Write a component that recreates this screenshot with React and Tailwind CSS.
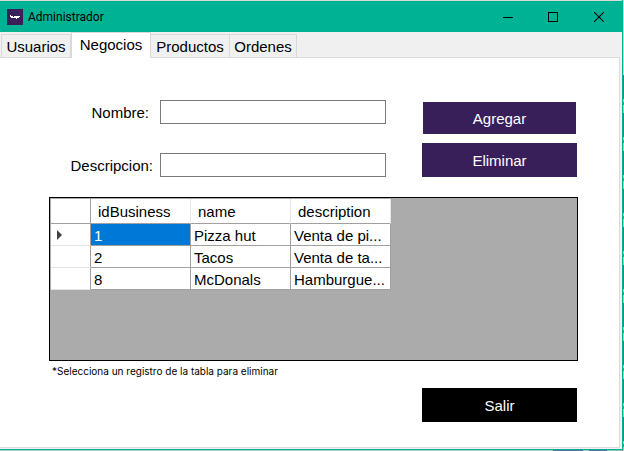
import React from "react";

const TABS = ["Usuarios", "Negocios", "Productos", "Ordenes"];
const TAB_WIDTHS = ["w-[70px]", "w-[80px]", "w-[79px]", "w-[67px]"];

const ROWS = [
  { id: "1", name: "Pizza hut", description: "Venta de pi..." },
  { id: "2", name: "Tacos", description: "Venta de ta..." },
  { id: "8", name: "McDonals", description: "Hamburgue..." },
];

function TitleBar() {
  return (
    <header className="flex h-8 items-stretch border-t border-[#d9d9d9] bg-[#00b294]">
      <div className="flex flex-1 items-center gap-[5px] pl-[7px]">
        <svg width="16" height="16" viewBox="0 0 16 16" aria-hidden="true" shapeRendering="crispEdges">
          <rect width="16" height="16" fill="#381f5a" />
          <path d="M3 6h1v1h2v1h1V7h6v1h-1v1h-2v1H9V9H4V8H3z" fill="#fff" />
        </svg>
        <h1 className="font-[Roboto,sans-serif] text-[12px] leading-4">Administrador</h1>
      </div>
      <div className="flex">
        <button type="button" aria-label="Minimizar" className="flex w-[45px] items-center justify-center">
          <svg width="10" height="10" viewBox="0 0 10 10" shapeRendering="crispEdges">
            <rect y="5" width="10" height="1" />
          </svg>
        </button>
        <button type="button" aria-label="Maximizar" className="flex w-[46px] items-center justify-center">
          <svg width="10" height="10" viewBox="0 0 10 10" shapeRendering="crispEdges">
            <path d="M0 0h10v10H0zM1 1v8h8V1z" fillRule="evenodd" />
          </svg>
        </button>
        <button type="button" aria-label="Cerrar" className="flex w-[46px] items-center justify-center">
          <svg width="10" height="10" viewBox="0 0 10 10">
            <path d="M0 0l10 10M10 0L0 10" stroke="#000" strokeWidth="1.1" />
          </svg>
        </button>
      </div>
    </header>
  );
}

function TabStrip() {
  return (
    <div role="tablist" className="relative flex h-[25px] items-end pl-px">
      {TABS.map((tab, i) =>
        tab === "Negocios" ? (
          <button
            key={tab}
            type="button"
            role="tab"
            aria-selected="true"
            className={`z-10 -mb-px h-[26px] border-x border-t border-[#d9d9d9] bg-white pb-[2px] ${TAB_WIDTHS[i]}`}
          >
            {tab}
          </button>
        ) : (
          <button
            key={tab}
            type="button"
            role="tab"
            aria-selected="false"
            className={`h-[23px] border-t border-r border-[#d9d9d9] bg-[#f0f0f0] pt-[2px] first:border-l ${TAB_WIDTHS[i]}`}
          >
            {tab}
          </button>
        )
      )}
    </div>
  );
}

function Field({ id, label, gap }) {
  return (
    <div className="flex h-6 items-center">
      <label htmlFor={id} className={`w-[111px] flex-none pt-[2px] text-right leading-5 ${gap}`}>
        {label}
      </label>
      <input id={id} type="text" className="h-6 min-w-0 flex-1 border border-[#7a7a7a] bg-white px-1 outline-none" />
    </div>
  );
}

function BusinessTable() {
  const head = "border-r border-b border-b-[#a0a0a0] border-r-[#e5e5e5] pt-[2px] pl-[7px] text-left font-normal";
  const cell = "whitespace-nowrap border-r border-b border-[#a0a0a0] pt-[2px] pl-[3px] leading-[19px]";
  return (
    <div className="h-[164px] border border-black bg-[#ababab] pt-px pl-px">
      <table className="w-[340px] table-fixed border-separate border-spacing-0 bg-white">
        <colgroup>
          <col className="w-10" />
          <col className="w-[100px]" />
          <col className="w-[100px]" />
          <col className="w-[100px]" />
        </colgroup>
        <thead>
          <tr className="h-[25px]">
            <td className="border-r border-b border-[#a0a0a0]" />
            <th scope="col" className={head}>idBusiness</th>
            <th scope="col" className={head}>name</th>
            <th scope="col" className={head}>description</th>
          </tr>
        </thead>
        <tbody>
          {ROWS.map((row, i) => (
            <tr key={row.id} className="h-[22px]">
              <td className="border-r border-b border-r-[#a0a0a0] border-b-[#e5e5e5] pl-[6px]">
                {i === 0 && (
                  <svg width="5" height="10" viewBox="0 0 5 10" className="block">
                    <path d="M0 0l5 5-5 5z" fill="#404040" />
                  </svg>
                )}
              </td>
              <td className={`${cell} ${i === 0 ? "bg-[#0078d7] text-white" : ""}`}>{row.id}</td>
              <td className={cell}>{row.name}</td>
              <td className={cell}>{row.description}</td>
            </tr>
          ))}
        </tbody>
      </table>
    </div>
  );
}

function DesktopEdges() {
  return (
    <>
      <div className="flex flex-col">
        <div className="h-[75px] bg-[#d9d9d9]" />
        <div className="flex-1 bg-[repeating-linear-gradient(#3f74a6_0_24px,#8fd6b4_24px_27px,#3f9a9c_27px_30px,#8fd6b4_30px_38px)]" />
      </div>
      <div className="col-span-2 h-px bg-[linear-gradient(to_left,#8fc4b4_0_17px,#5b68a5_17px_35px,#a9c6bd_35px_41px,#5b68a5_41px_71px,#b5cbc3_71px)]" />
    </>
  );
}

export default function App() {
  return (
    <div className="grid min-h-screen grid-cols-[1fr_1px] grid-rows-[1fr_1px] font-['Liberation_Sans',Arial,sans-serif] text-[15px] leading-5 text-black">
      <div className="flex flex-col border-r border-b border-[#00b294] bg-[#f0f0f0]">
        <TitleBar />
        <TabStrip />
        <main className="mr-[2px] mb-px flex flex-1 flex-col border-t border-r border-b border-[#dcdcdc] bg-white pt-[42px] pr-[41px] pl-[49px]">
          <div className="flex gap-9">
            <div className="flex flex-1 flex-col gap-[29px]">
              <Field id="nombre" label="Nombre:" gap="pr-[11px]" />
              <Field id="descripcion" label="Descripcion:" gap="pr-[7px]" />
            </div>
            <div className="mr-px flex w-[155px] flex-col gap-[9px] pt-[2px] text-white">
              <button type="button" className="mx-px h-8 bg-[#381f5a] pt-[2px]">
                Agregar
              </button>
              <button type="button" className="h-[34px] bg-[#381f5a] pt-[2px]">
                Eliminar
              </button>
            </div>
          </div>
          <div className="mt-5">
            <BusinessTable />
          </div>
          <p className="mt-[2px] pl-[3px] font-[Inter,sans-serif] text-[10px] leading-4">
            *Selecciona un registro de la tabla para eliminar
          </p>
          <button type="button" className="mt-[9px] mr-px h-[34px] w-[155px] self-end bg-black pt-[2px] text-white">
            Salir
          </button>
        </main>
      </div>
      <DesktopEdges />
    </div>
  );
}
